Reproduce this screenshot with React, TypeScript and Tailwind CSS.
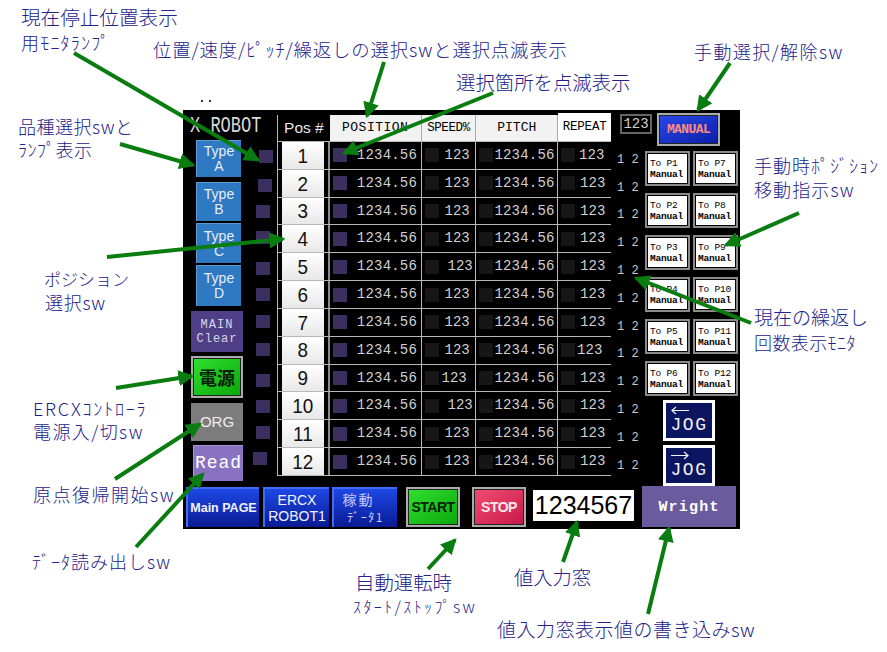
const mono = "font-['Liberation_Mono',monospace]";
const sans = "font-['Liberation_Sans',sans-serif]";

const notes = [
  ["left-[21px] top-[7px] text-[19.6px]", "現在停止位置表示"],
  ["left-[21px] top-[32px] text-[18px] tracking-[1.2px]", "用ﾓﾆﾀﾗﾝﾌﾟ"],
  ["left-[18px] top-[116px] text-[18px] tracking-[0.5px]", "品種選択swと"],
  ["left-[18px] top-[139px] text-[18px] tracking-[0.5px]", "ﾗﾝﾌﾟ表示"],
  ["left-[44px] top-[269px] text-[17px]", "ポジション"],
  ["left-[45px] top-[292px] text-[18px] tracking-[0.7px]", "選択sw"],
  ["left-[33px] top-[398px] text-[18px] tracking-[1.8px]", "ERCXｺﾝﾄﾛｰﾗ"],
  ["left-[33px] top-[421px] text-[18px] tracking-[1.4px]", "電源入/切sw"],
  ["left-[33px] top-[484px] text-[18px] tracking-[1.5px]", "原点復帰開始sw"],
  ["left-[32px] top-[551px] text-[18px] tracking-[1px]", "ﾃﾞｰﾀ読み出しsw"],
  ["left-[153px] top-[39px] text-[18.4px] tracking-[0.85px]", "位置/速度/ﾋﾟｯﾁ/繰返しの選択swと選択点滅表示"],
  ["left-[456px] top-[72px] text-[19.4px]", "選択箇所を点滅表示"],
  ["left-[694px] top-[41px] text-[18px] tracking-[1.4px]", "手動選択/解除sw"],
  ["left-[754px] top-[155px] text-[18px] tracking-[1px]", "手動時ﾎﾟｼﾞｼｮﾝ"],
  ["left-[754px] top-[179px] text-[18px] tracking-[1.1px]", "移動指示sw"],
  ["left-[754px] top-[307px] text-[19px]", "現在の繰返し"],
  ["left-[754px] top-[332px] text-[18px] tracking-[0.4px]", "回数表示ﾓﾆﾀ"],
  ["left-[355px] top-[572px] text-[19.4px]", "自動運転時"],
  ["left-[353px] top-[596px] text-[16px] tracking-[2.4px]", "ｽﾀｰﾄ/ｽﾄｯﾌﾟsw"],
  ["left-[514px] top-[567px] text-[19.3px]", "値入力窓"],
  ["left-[497px] top-[619px] text-[19px] tracking-[0.5px]", "値入力窓表示値の書き込みsw"],
];

const arrows = [
  [74, 53, 258, 160],
  [120, 144, 193, 165],
  [384, 62, 367, 116],
  [493, 93, 344, 153],
  [730, 63, 698, 110],
  [799, 213, 726, 245],
  [751, 323, 636, 278],
  [107, 257, 283, 239],
  [116, 388, 192, 376],
  [115, 479, 200, 424],
  [136, 547, 203, 474],
  [428, 569, 455, 540],
  [563, 562, 577, 522],
  [648, 614, 669, 528],
];

const lamps = [
  "ml-[14px] mt-[10px]", "ml-[13px] mt-[16px]", "ml-[11px] mt-[13px]", "ml-[11px] mt-[13px]",
  "ml-[11px] mt-[18px]", "ml-[11px] mt-[13px]", "ml-[11px] mt-[14px]", "ml-[11px] mt-[15px]",
  "ml-[11px] mt-[18px]", "ml-[11px] mt-[13px]", "ml-[11px] mt-[13px]", "ml-[8px] mt-[13px]",
];

const speedPad = [
  "pl-[23px]", "pl-[23px]", "pl-[23px]", "pl-[23px]", "pl-[26px]", "pl-[23px]",
  "pl-[23px]", "pl-[23px]", "pl-[20px]", "pl-[26px]", "pl-[23px]", "pl-[23px]",
];
const repeatPad = [
  "pl-[21px]", "pl-[22px]", "pl-[22px]", "pl-[22px]", "pl-[22px]", "pl-[22px]",
  "pl-[22px]", "pl-[19px]", "pl-[22px]", "pl-[22px]", "pl-[22px]", "pl-[22px]",
];

function TypeButton({ letter, box }: { letter: string; box: string }) {
  return (
    <div className={`${box} ml-[13px] w-[45px] bg-[#2f78c2] border-t border-l border-[#5f9cd6] flex flex-col items-center justify-center text-[#e4eef8] ${sans} text-[14px] leading-[15px]`}>
      <span>Type</span>
      <span>{letter}</span>
    </div>
  );
}

function Bevel({ frame, face, children }: { frame: string; face: string; children: React.ReactNode }) {
  return (
    <div className={`${frame} border-2 border-[#a9aca9] bg-[#222] p-[1px] flex`}>
      <div className={`${face} flex-1 flex items-center justify-center overflow-hidden`}>{children}</div>
    </div>
  );
}

function BlueButton({ width, children }: { width: string; children: React.ReactNode }) {
  return (
    <div className={`${width} h-[40px] bg-gradient-to-b from-[#1e48e6] to-[#0a1a94] border-t-2 border-l-2 border-[#3f6cf0] flex flex-col items-center justify-center text-[#f2f2ff] leading-[16px]`}>
      {children}
    </div>
  );
}

function ToButton({ target }: { target: string }) {
  return (
    <div className="w-[45px] h-[35px] border-2 border-[#8b8b8b] bg-black p-[1px] flex">
      <div className={`flex-1 bg-white text-black ${mono} text-[9.5px] leading-[11px] pl-[2px] flex flex-col justify-center tracking-[-0.2px] whitespace-nowrap overflow-hidden`}>
        <span>{target}</span>
        <span className="font-bold">Manual</span>
      </div>
    </div>
  );
}

function Jog({ dir, margin }: { dir: "left" | "right"; margin: string }) {
  return (
    <div className={`${margin} ml-[18px] w-[52px] h-[41px] bg-[#0b1560] border-[3px] border-white flex flex-col items-center text-[#f0f0f0] ${mono}`}>
      <svg className="self-start ml-[5px] mt-[3px] shrink-0" width="18" height="9" viewBox="0 0 18 9" fill="none" stroke="#f0f0f0" strokeWidth="1.2">
        {dir === "left" ? <path d="M18 4.5H1M5 1L1 4.5L5 8" /> : <path d="M0 4.5H17M13 1L17 4.5L13 8" />}
      </svg>
      <span className="text-[18px] leading-[20px] tracking-[1.5px]">JOG</span>
    </div>
  );
}

function Row({ n, i }: { n: number; i: number }) {
  return (
    <div className="flex-1 flex border-b border-[#b8b8b8] min-h-0">
      <div className="w-[52px] px-[4px] border-r-2 border-[#8a8a8a]">
        <div className={`h-full bg-gradient-to-b from-white to-[#e8e8e8] flex items-center justify-center text-[#111] ${sans} text-[21px]`}>
          <span className="scale-x-[0.9] -ml-[1px]">{n}</span>
        </div>
      </div>
      <div className={`w-[92px] flex items-center border-r border-[#b8b8b8] text-[#d0d0d0] ${mono} text-[14px] tracking-[0.2px]`}>
        <span className="ml-[3px] w-[14px] h-[14px] bg-[#3a2f5e]" />
        <span className="ml-[10px]">1234.56</span>
      </div>
      <div className={`w-[55px] flex items-center border-r border-[#b8b8b8] text-[#d0d0d0] ${mono} text-[14px] ${speedPad[i]} relative`}>
        <span className="absolute left-[3px] w-[14px] h-[14px] bg-[#161616]" />
        <span>123</span>
      </div>
      <div className={`w-[82px] flex items-center border-r border-[#b8b8b8] text-[#d0d0d0] ${mono} text-[14px] tracking-[0.2px]`}>
        <span className="ml-[3px] w-[14px] h-[14px] bg-[#161616]" />
        <span className="ml-[1px]">1234.56</span>
      </div>
      <div className={`w-[53px] flex items-center text-[#d0d0d0] ${mono} text-[14px] ${repeatPad[i]} relative`}>
        <span className="absolute left-[3px] w-[14px] h-[14px] bg-[#161616]" />
        <span>123</span>
      </div>
    </div>
  );
}

export default function App() {
  const nums = Array.from({ length: 12 }, (_, i) => i + 1);
  return (
    <div className="relative w-[887px] h-[652px] bg-white overflow-hidden font-['Noto_Sans_CJK_JP',sans-serif]">
      <div className="absolute left-[201px] top-[100px] w-[10px] h-[2px] border-x-2 border-[#333]" />

      <div className="absolute left-[183px] top-[110px] w-[557px] h-[419px] bg-black flex flex-col">
        <div className="flex h-[376px]">
          {/* left */}
          <div className="w-[94px] flex flex-col shrink-0">
            <div className={`h-[30px] pl-[7px] pt-[9px] text-[#d8d8d8] ${mono} text-[17px] leading-[16px] whitespace-nowrap`}>
              <span className="inline-block scale-y-[1.3]">X ROBOT</span>
            </div>
            <div className="flex">
              <div className="w-[62px] flex flex-col shrink-0">
                <TypeButton letter="A" box="h-[37px]" />
                <TypeButton letter="B" box="h-[39px] mt-[5px]" />
                <TypeButton letter="C" box="h-[40px] mt-[2px]" />
                <TypeButton letter="D" box="h-[41px] mt-[2px]" />
                <div className={`ml-[8px] mt-[5px] w-[52px] h-[41px] bg-[#4f3f86] flex flex-col items-center justify-center text-[#d8d4e8] ${mono} text-[12px] leading-[14px] tracking-[1px]`}>
                  <span>MAIN</span>
                  <span>Clear</span>
                </div>
                <Bevel frame="ml-[8px] mt-[4px] w-[52px] h-[42px]" face="bg-gradient-to-br from-[#2ee02e] to-[#08a808]">
                  <span className="text-[#062006] text-[18px] font-bold leading-none">電源</span>
                </Bevel>
                <div className={`ml-[8px] mt-[5px] w-[52px] h-[38px] bg-[#7c7c7c] flex items-center justify-center text-[#eeeeee] ${sans} text-[15px]`}>ORG</div>
                <div className={`ml-[10px] mt-[4px] w-[50px] h-[36px] bg-[#8a72c2] border-t border-l border-[#a595d6] flex items-center justify-center text-white ${mono} text-[18px] tracking-[1px]`}>Read</div>
              </div>
              <div className="flex flex-col">
                {lamps.map((c, i) => (
                  <span key={i} className={`${c} w-[14px] h-[13px] bg-[#3a2f5e]`} />
                ))}
              </div>
            </div>
          </div>

          {/* table */}
          <div className="w-[334px] h-[361px] mt-[5px] flex flex-col border-l border-[#b8b8b8] shrink-0">
            <div className={`h-[27px] flex text-black ${mono} text-[13px] shrink-0 border-b border-[#b8b8b8]`}>
              <div className={`w-[52px] bg-black text-[#e8e8e8] flex items-center justify-center text-[15.5px] ${sans}`}>Pos #</div>
              <div className="w-[92px] bg-[#f2f2f2] border-r border-[#aaa] flex items-center justify-center tracking-[0.5px]">POSITION</div>
              <div className="w-[55px] bg-[#f2f2f2] border-r border-[#aaa] flex items-center justify-center text-[12.5px] tracking-[-0.4px]">SPEED%</div>
              <div className="w-[82px] bg-[#f2f2f2] border-r border-[#aaa] flex items-center justify-center">PITCH</div>
              <div className="w-[53px] bg-white flex items-center justify-center text-[12.5px] tracking-[-0.2px] -mt-[2px]">REPEAT</div>
            </div>
            {nums.map((n, i) => (
              <Row key={n} n={n} i={i} />
            ))}
          </div>

          {/* right */}
          <div className="flex-1 flex flex-col min-w-0">
            <div className="h-[36px] flex shrink-0">
              <div className={`ml-[9px] mt-[4px] w-[32px] h-[20px] border-2 border-[#666] flex items-center justify-center text-[#d0d0d0] ${mono} text-[14px]`}>123</div>
              <Bevel frame="ml-[5px] mt-[3px] w-[63px] h-[33px]" face="bg-gradient-to-br from-[#2a48e8] to-[#0c1ea8]">
                <span className={`text-[#ff8a80] ${mono} font-bold text-[13px] tracking-[-0.6px]`}>MANUAL</span>
              </Bevel>
            </div>
            <div className="flex">
              <div className={`w-[34px] shrink-0 flex flex-col text-[#c8c8c8] ${mono} text-[12px]`}>
                {nums.map((n) => (
                  <div key={n} className="h-[27.8px] pl-[6px] flex items-center whitespace-pre">1 2</div>
                ))}
              </div>
              <div className="flex flex-col pt-[5px]">
                <div className="grid grid-cols-[45px_45px] gap-x-[3px] gap-y-[7px]">
                  {[
                    ["To P1", "To P7"], ["To P2", "To P8"], ["To P3", "To P9"],
                    ["To P4", "To P10"], ["To P5", "To P11"], ["To P6", "To P12"],
                  ].flat().map((t) => (
                    <ToButton key={t} target={t} />
                  ))}
                </div>
                <Jog dir="left" margin="mt-[4px]" />
                <Jog dir="right" margin="mt-[4px]" />
              </div>
            </div>
          </div>
        </div>

        {/* bottom */}
        <div className="flex mt-[1px] ml-[3px]">
          <BlueButton width="w-[73px]"><span className={`${sans} font-bold text-[12.5px] whitespace-nowrap`}>Main PAGE</span></BlueButton>
          <div className="w-[4px]" />
          <BlueButton width="w-[66px]">
            <span className={`${sans} text-[14px]`}>ERCX</span>
            <span className={`${sans} text-[14px]`}>ROBOT1</span>
          </BlueButton>
          <div className="w-[3px]" />
          <BlueButton width="w-[65px]">
            <span className="text-[14px] leading-[18px] h-[18px] text-[#c8c8ff] tracking-[2px] pr-[14px]">稼動</span>
            <span className="text-[12px] leading-[18px] h-[18px] text-[#c8c8ff] tracking-[1.5px]">ﾃﾞｰﾀ1</span>
          </BlueButton>
          <Bevel frame="ml-[9px] w-[54px] h-[40px]" face="bg-gradient-to-br from-[#2ee02e] to-[#08a808]">
            <span className={`text-[#062006] ${sans} font-bold text-[14px] tracking-[-0.5px]`}>START</span>
          </Bevel>
          <Bevel frame="ml-[12px] w-[54px] h-[40px]" face="bg-gradient-to-br from-[#f04a72] to-[#c8164a]">
            <span className={`text-[#ffe8ee] ${sans} font-bold text-[14px] tracking-[-0.5px]`}>STOP</span>
          </Bevel>
          <div className={`ml-[7px] mt-[3px] w-[101px] h-[31px] bg-white flex items-center justify-center text-black ${sans} text-[25px]`}>1234567</div>
          <div className={`ml-[8px] -mt-[1px] w-[94px] h-[41px] pt-[3px] bg-[#6a5a9e] flex items-center justify-center text-white ${mono} font-bold text-[15px] tracking-[1.2px]`}>Wright</div>
        </div>
      </div>

      {notes.map(([pos, text]) => (
        <div key={text} className={`absolute ${pos} leading-[20px] whitespace-nowrap font-light text-[#22228a]`}>{text}</div>
      ))}

      <svg className="absolute inset-0 pointer-events-none" width="887" height="652" viewBox="0 0 887 652">
        <defs>
          <marker id="head" markerWidth="4" markerHeight="4" refX="3.4" refY="2" orient="auto" markerUnits="strokeWidth">
            <path d="M0 0L4 2L0 4Z" fill="#0a7d10" />
          </marker>
        </defs>
        {arrows.map(([a, b, c, d], i) => (
          <line key={i} x1={a} y1={b} x2={c} y2={d} stroke="#0a7d10" strokeWidth="4" markerEnd="url(#head)" />
        ))}
      </svg>
    </div>
  );
}
